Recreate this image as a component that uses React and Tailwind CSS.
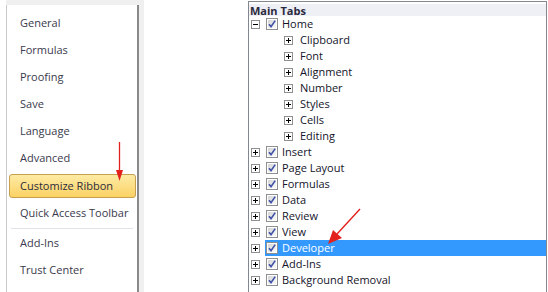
import React from "react";

const sideItems = ["General", "Formulas", "Proofing", "Save", "Language", "Advanced"];

const tree = [
  { label: "Home", open: true },
  { label: "Clipboard", child: true },
  { label: "Font", child: true },
  { label: "Alignment", child: true },
  { label: "Number", child: true },
  { label: "Styles", child: true },
  { label: "Cells", child: true },
  { label: "Editing", child: true },
  { label: "Insert" },
  { label: "Page Layout" },
  { label: "Formulas" },
  { label: "Data" },
  { label: "Review" },
  { label: "View" },
  { label: "Developer", selected: true },
  { label: "Add-Ins" },
  { label: "Background Removal" },
];

function Expander({ open }) {
  return (
    <svg width="9" height="9" viewBox="0 0 9 9" className="shrink-0">
      <rect x="0.5" y="0.5" width="8" height="8" fill="#fff" stroke="#8f8f8f" />
      <path d="M2 4.5h5" stroke="#000" />
      {!open && <path d="M4.5 2v5" stroke="#000" />}
    </svg>
  );
}

function Check() {
  return (
    <svg width="12" height="12" viewBox="0 0 12 12" className="shrink-0">
      <defs>
        <linearGradient id="cb" x1="0" y1="0" x2="1" y2="1">
          <stop offset="0" stopColor="#d4d4d4" />
          <stop offset="1" stopColor="#fbfbfb" />
        </linearGradient>
      </defs>
      <rect x="0.5" y="0.5" width="11" height="11" fill="#fff" stroke="#8e8f8f" />
      <rect x="2" y="2" width="8" height="8" fill="url(#cb)" />
      <path d="M3 6.2l2 2.4L9.2 2.6" fill="none" stroke="#3d50a5" strokeWidth="1.6" />
    </svg>
  );
}

function TreeRow({ item }) {
  if (item.child) {
    return (
      <div className="h-[16px] flex items-center pl-[35px]">
        <Expander />
        <span className="ml-[7px] text-[#14142a]">{item.label}</span>
      </div>
    );
  }
  return (
    <div className="h-[16px] flex items-center pl-[2px]">
      <Expander open={item.open} />
      <div
        className={
          "ml-[5px] h-[16px] flex items-center pl-[1px] flex-1 " +
          (item.selected ? "bg-[#3399ff] text-white" : "text-[#14142a]")
        }
      >
        <Check />
        <span className="ml-[4px]">{item.label}</span>
      </div>
    </div>
  );
}

export default function App() {
  return (
    <div className="relative w-[548px] h-[292px] bg-white flex overflow-hidden font-['Open_Sans',sans-serif] text-[11px]">
      {/* options sidebar */}
      <div className="ml-[6px] w-[138px] h-full bg-[#f0f0f0] pt-[5px] pr-[5px] flex">
        <div className="w-full h-full bg-white border-l border-[#c9c9c9] border-r-2 border-r-[#8a8a8a] pt-[5px] text-[#3a3a4c]">
          {sideItems.map((s) => (
            <div key={s} className="h-[27px] flex items-center pl-[13px]">
              {s}
            </div>
          ))}
          <div className="mt-[2px] ml-[2px] mr-[1px] h-[24px] flex items-center pl-[10px] rounded-[3px] border border-[#c6a04e] bg-gradient-to-b from-[#fdeba4] to-[#fbd262] text-[#2c2c3c]">
            Customize Ribbon
          </div>
          <div className="h-[30px] flex items-center pl-[13px]">Quick Access Toolbar</div>
          <div className="mx-[4px] h-px bg-[#e2e3ea]" />
          <div className="h-[28px] flex items-center pl-[13px]">Add-Ins</div>
          <div className="h-[27px] flex items-center pl-[13px]">Trust Center</div>
        </div>
      </div>

      {/* ribbon tree */}
      <div className="ml-[104px] mt-[1px] w-[299px] h-[300px] border border-[#828790] shrink-0">
        <div className="mt-[2px] h-[12px] bg-[#eef0f5] flex items-center pl-[1px] font-bold text-[#2a2a3e] leading-none">
          Main Tabs
        </div>
        {tree.map((t) => (
          <TreeRow key={t.label + (t.child ? "c" : "")} item={t} />
        ))}
      </div>

      {/* red arrows */}
      <svg className="absolute left-0 top-0 pointer-events-none" width="548" height="292">
        <path d="M119.5 142V172" stroke="#e3211c" strokeWidth="1.3" />
        <path d="M116 170L119.5 181L123 170Z" fill="#e3211c" />
        <path d="M360 209L337 234" stroke="#e3211c" strokeWidth="1.4" />
        <path d="M328 244L333 230L342 238Z" fill="#e3211c" />
      </svg>
    </div>
  );
}
